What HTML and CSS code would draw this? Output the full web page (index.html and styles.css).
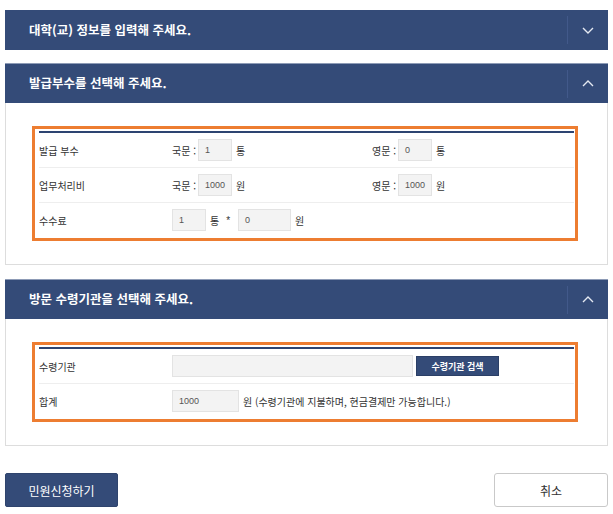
FILE: index.html
```html
<!DOCTYPE html>
<html lang="ko">
<head>
<meta charset="utf-8">
<title>발급 신청</title>
<link rel="stylesheet" href="styles.css">
</head>
<body>
<div class="page">
  <section class="panel">
    <div class="panel-head">
      <h2 class="panel-title">대학(교) 정보를 입력해 주세요.</h2>
      <span class="toggle"><svg width="12" height="7" viewBox="0 0 12 7"><polyline points="1,1 6,6 11,1" fill="none" stroke="#e4e9f2" stroke-width="1.4"/></svg></span>
    </div>
  </section>

  <section class="panel open">
    <div class="panel-head">
      <h2 class="panel-title">발급부수를 선택해 주세요.</h2>
      <span class="toggle"><svg width="12" height="7" viewBox="0 0 12 7"><polyline points="1,6 6,1 11,6" fill="none" stroke="#e4e9f2" stroke-width="1.4"/></svg></span>
    </div>
    <div class="panel-body">
      <div class="mark">
        <div class="form">
          <div class="row">
            <div class="th">발급 부수</div>
            <div class="td"><span class="lbl">국문 :</span><span class="field w34">1</span><span class="unit">통</span></div>
            <div class="td"><span class="lbl">영문 :</span><span class="field w34">0</span><span class="unit">통</span></div>
          </div>
          <div class="row">
            <div class="th">업무처리비</div>
            <div class="td"><span class="lbl">국문 :</span><span class="field w34">1000</span><span class="unit">원</span></div>
            <div class="td"><span class="lbl">영문 :</span><span class="field w34">1000</span><span class="unit">원</span></div>
          </div>
          <div class="row">
            <div class="th">수수료</div>
            <div class="td span2"><span class="field w34 first">1</span><span class="unit">통</span><span class="times">*</span><span class="field w53">0</span><span class="unit">원</span></div>
          </div>
        </div>
      </div>
    </div>
  </section>

  <section class="panel open">
    <div class="panel-head">
      <h2 class="panel-title">방문 수령기관을 선택해 주세요.</h2>
      <span class="toggle"><svg width="12" height="7" viewBox="0 0 12 7"><polyline points="1,6 6,1 11,6" fill="none" stroke="#e4e9f2" stroke-width="1.4"/></svg></span>
    </div>
    <div class="panel-body">
      <div class="mark">
        <div class="form">
          <div class="row">
            <div class="th">수령기관</div>
            <div class="td span2"><span class="field w241 first"></span><button class="btn-search" type="button">수령기관 검색</button></div>
          </div>
          <div class="row">
            <div class="th">합계</div>
            <div class="td span2"><span class="field w67 first">1000</span><span class="note">원 (수령기관에 지불하며, 현금결제만 가능합니다.)</span></div>
          </div>
        </div>
      </div>
    </div>
  </section>

  <div class="actions">
    <button class="btn btn-primary" type="button">민원신청하기</button>
    <button class="btn btn-cancel" type="button">취소</button>
  </div>
</div>
</body>
</html>
```

FILE: styles.css
```css
* { box-sizing: border-box; }

body {
  margin: 0;
  background: #fff;
  font-family: "Noto Sans CJK KR", "Noto Sans", sans-serif;
  color: #333;
}

.page {
  padding: 10px 5px 0;
}

.panel {
  margin-bottom: 13px;
}

.panel.open {
  margin-bottom: 14px;
}

.panel-head {
  display: flex;
  align-items: center;
  height: 40px;
  background: #344b78;
}

.panel.open .panel-head {
  border-top: 1px solid #8d9bb6;
}

.panel-title {
  flex: 1;
  margin: 0;
  padding-left: 24px;
  font-size: 12.5px;
  font-weight: 700;
  color: #fff;
  line-height: 1;
}

.toggle {
  display: flex;
  align-items: center;
  justify-content: center;
  width: 41px;
  height: 28px;
  border-left: 1px solid #42598a;
}

.panel-body {
  border: 1px solid #dddddd;
  border-top: 0;
  padding: 23px 29px 23px 26px;
}

.mark {
  border: 3px solid #ed7d31;
  padding: 2px 1px 1px 4px;
}

.form {
  border-top: 2px solid #2d4471;
}

.row {
  display: grid;
  grid-template-columns: 133px 200px 1fr;
  align-items: center;
  height: 35px;
  border-bottom: 1px solid #eeeeee;
  font-size: 10px;
}

.row:last-child {
  border-bottom: 0;
  height: 34px;
}

.th {
  color: #333;
}

.td {
  display: flex;
  align-items: center;
  color: #333;
}

.span2 {
  grid-column: 2 / 4;
}

.lbl {
  margin-right: 2px;
}

.field {
  display: inline-block;
  height: 22px;
  line-height: 20px;
  padding: 0 6px;
  background: #f3f3f3;
  border: 1px solid #e3e3e3;
  font-family: "Liberation Sans", Arial, sans-serif;
  font-size: 9px;
  color: #555;
}

.w34 { width: 34px; }
.w53 { width: 53px; }
.w67 { width: 67px; }
.w241 { width: 241px; }

.unit {
  margin-left: 4px;
}

.times {
  margin: 0 8px 0 7px;
  font-family: "Liberation Sans", Arial, sans-serif;
}

.note {
  margin-left: 4px;
}

.btn-search {
  margin-left: 3px;
  width: 83px;
  height: 20px;
  padding: 0;
  background: #344b78;
  border: 1px solid #2b3f66;
  color: #fff;
  font-family: "Noto Sans CJK KR", sans-serif;
  font-size: 9px;
  font-weight: 700;
}

.panel:last-of-type {
  margin-bottom: 0;
}

.actions {
  display: flex;
  justify-content: space-between;
  margin-top: 27px;
}

.btn {
  height: 34px;
  font-family: "Noto Sans CJK KR", sans-serif;
  font-size: 12px;
  padding: 0;
}

.btn-primary {
  width: 113px;
  background: #344b78;
  border: 1px solid #2f446d;
  border-radius: 2px;
  color: #fff;
}

.btn-cancel {
  width: 114px;
  background: #fff;
  border: 1px solid #c9c9c9;
  border-radius: 3px;
  color: #333;
}
```
